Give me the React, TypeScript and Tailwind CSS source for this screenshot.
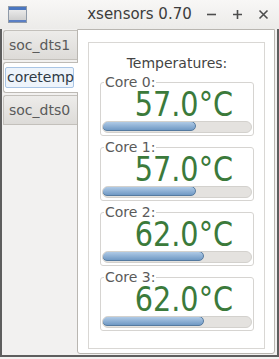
import React from 'react';

const cores = [
  { name: 'Core 0:', temp: 57 },
  { name: 'Core 1:', temp: 57 },
  { name: 'Core 2:', temp: 62 },
  { name: 'Core 3:', temp: 62 },
];

const tabs = ['soc_dts1', 'coretemp', 'soc_dts0'];

const TitleBar = () => (
  <div className="relative h-[29px] flex items-center bg-gradient-to-b from-[#f8f7f6] to-[#ecebe9] shrink-0">
    {/* app icon */}
    <div className="ml-[8px] w-[19px] h-[17px] flex flex-col border border-[#8f9aa8] bg-gradient-to-b from-[#f2f2f2] to-[#c9c9c9]">
      <div className="h-[3px] bg-[#4a76c0]" />
      <div className="flex-1" />
      <div className="h-[2px] bg-[#5b7fc4]" />
    </div>
    <span className="absolute left-0 right-0 text-center text-[15px] text-[#3c3c3c] pointer-events-none">
      xsensors 0.70
    </span>
    <div className="ml-auto mr-[10px] flex items-center gap-[15px] text-[#4d4d4d]">
      <svg width="11" height="11" viewBox="0 0 11 11">
        <path d="M1 5.5H10" stroke="currentColor" strokeWidth="1.6" />
      </svg>
      <svg width="11" height="11" viewBox="0 0 11 11">
        <path d="M1 5.5H10M5.5 1V10" stroke="currentColor" strokeWidth="1.6" />
      </svg>
      <svg width="11" height="11" viewBox="0 0 11 11">
        <path d="M1.5 1.5L9.5 9.5M9.5 1.5L1.5 9.5" stroke="currentColor" strokeWidth="1.6" />
      </svg>
    </div>
  </div>
);

const CoreBox = ({ name, temp }: { name: string; temp: number }) => (
  <div className="relative border border-[#d6d4d1] rounded-[3px] px-[1px] pt-[5px] pb-[2px]">
    <span className="absolute -top-[10px] left-[3px] bg-white px-[1px] text-[14px] leading-[18px] text-[#5a5a5a]">
      {name}
    </span>
    <div className="h-[33px] flex justify-end pr-[19px] pt-[5px]">
      <span className="block text-[33px] leading-[24px] text-[#3b7a3b] scale-x-[0.87] origin-right whitespace-nowrap">
        {temp.toFixed(1)}°C
      </span>
    </div>
    <div className="h-[12px] rounded-full bg-[#e4e2df] border border-[#d3d1cd] overflow-hidden">
      <div
        className="h-full rounded-full bg-gradient-to-b from-[#afcae6] to-[#7099c4] border border-[#557a9f] -m-[1px]"
        style={{ width: `${(temp / 90) * 100}%` }}
      />
    </div>
  </div>
);

export default function App() {
  return (
    <div
      className="w-[279px] h-[359px] bg-[#f2f1f0] flex flex-col overflow-hidden"
      style={{ fontFamily: '"DejaVu Sans", sans-serif' }}
    >
      <TitleBar />
      <div className="h-[328px] flex border-l-2 border-r-2 border-b-2 border-[#5e5e5e] pl-[1px] pr-[2px] pb-[1px]">
        {/* tabs */}
        <div className="w-[74px] flex flex-col shrink-0 pt-[1px]">
          {tabs.map((t) =>
            t === 'coretemp' ? (
              <div
                key={t}
                className="relative z-10 -mr-[1px] my-[2px] h-[31px] bg-white border border-r-0 border-[#bdbab5] rounded-l-[3px] flex items-center pl-[1px]"
              >
                <div className="w-[69px] h-[21px] border border-[#a9c5e5] bg-[#eef4fb] rounded-[2px] flex items-center pl-[1px] text-[14px] text-[#2f3a46]">
                  {t}
                </div>
              </div>
            ) : (
              <div
                key={t}
                className="h-[30px] border border-r-0 border-[#c3c0bb] rounded-tl-[3px] bg-gradient-to-b from-[#edecea] to-[#dddbd8] flex items-center pl-[5px] text-[14px] text-[#5a5a5a]"
              >
                {t}
              </div>
            )
          )}
        </div>
        {/* pane */}
        <div className="flex-1 bg-white border border-[#b9b6b1] rounded-b-[3px] pt-[12px] pl-[10px] pr-[9px] pb-[4px]">
          <div className="h-full border border-[#d9d7d4] pl-[11px] pr-[10px] pt-[11px]">
            <div className="text-center text-[14px] leading-[18px] text-[#444]">Temperatures:</div>
            <div className="mt-[10px] flex flex-col gap-[11px]">
              {cores.map((c) => (
                <CoreBox key={c.name} name={c.name} temp={c.temp} />
              ))}
            </div>
          </div>
        </div>
      </div>
    </div>
  );
}
